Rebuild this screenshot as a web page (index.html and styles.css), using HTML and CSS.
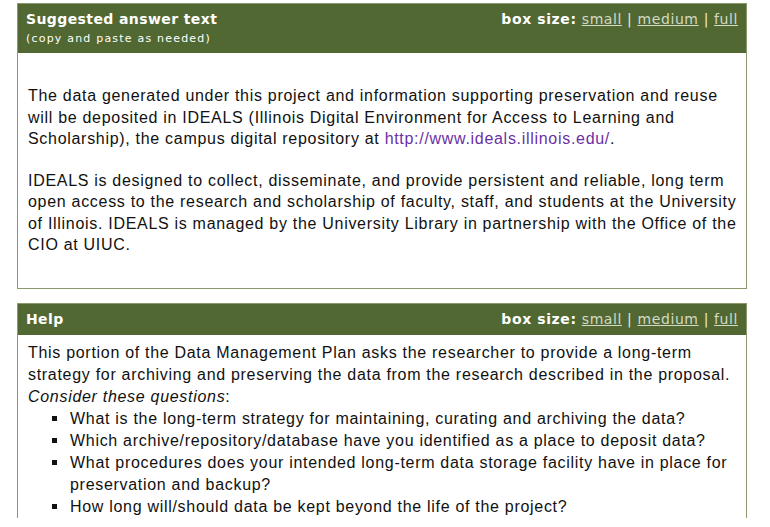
FILE: index.html
```html
<!DOCTYPE html>
<html>
<head>
<meta charset="utf-8">
<link rel="stylesheet" href="styles.css">
</head>
<body>
<div class="page">
  <section class="box">
    <div class="box-head tall">
      <div class="head-left">
        <div class="title">Suggested answer text</div>
        <div class="subtitle">(copy and paste as needed)</div>
      </div>
      <div class="sizes"><b>box size:</b> <a href="#">small</a> | <a href="#">medium</a> | <a href="#">full</a></div>
    </div>
    <div class="box-body answer">
      <p>The data generated under this project and information supporting preservation and reuse will be deposited in IDEALS (Illinois Digital Environment for Access to Learning and Scholarship), the campus digital repository at <a class="url" href="#">http://www.ideals.illinois.edu/</a>.</p>
      <p>IDEALS is designed to collect, disseminate, and provide persistent and reliable, long term open access to the research and scholarship of faculty, staff, and students at the University of Illinois. IDEALS is managed by the University Library in partnership with the Office of the CIO at UIUC.</p>
    </div>
  </section>
  <section class="box help">
    <div class="box-head">
      <div class="title">Help</div>
      <div class="sizes"><b>box size:</b> <a href="#">small</a> | <a href="#">medium</a> | <a href="#">full</a></div>
    </div>
    <div class="box-body helptext">
      <p>This portion of the Data Management Plan asks the researcher to provide a long-term strategy for archiving and preserving the data from the research described in the proposal. <i>Consider these questions</i>:</p>
      <ul>
        <li>What is the long-term strategy for maintaining, curating and archiving the data?</li>
        <li>Which archive/repository/database have you identified as a place to deposit data?</li>
        <li>What procedures does your intended long-term data storage facility have in place for preservation and backup?</li>
        <li>How long will/should data be kept beyond the life of the project?</li>
      </ul>
    </div>
  </section>
</div>
</body>
</html>
```
FILE: styles.css
```css
html, body {
  margin: 0;
  padding: 0;
  background: #ffffff;
}
.page {
  padding: 3px 0 0 17px;
  width: 730px;
}
.box {
  border: 1px solid #8a9a6e;
  background: #fff;
}
.box.help {
  margin-top: 14px;
  border-bottom: none;
}
.box-head {
  background: #526833;
  color: #fff;
  display: flex;
  justify-content: space-between;
  align-items: flex-start;
  padding: 6px 8px 7px 8px;
  font-family: "DejaVu Sans", Verdana, sans-serif;
}
.box-head.tall {
  height: 36px;
}
.title {
  font-weight: bold;
  font-size: 14px;
  letter-spacing: 0.4px;
  line-height: 18px;
}
.subtitle {
  font-size: 11px;
  letter-spacing: 1.2px;
  line-height: 14px;
  margin-top: 4px;
}
.sizes {
  font-size: 14px;
  letter-spacing: 0.6px;
  line-height: 18px;
  color: #e8ecde;
}
.sizes b {
  color: #fff;
}
.sizes a {
  color: #d3d9c6;
  text-decoration: underline;
}
.box-body {
  font-family: "Liberation Sans", Arial, sans-serif;
  font-size: 16px;
  letter-spacing: 0.7px;
  color: #111;
  padding: 0 0 0 10px;
}
.box-body p {
  margin: 0;
}
.answer {
  padding-top: 32px;
  padding-bottom: 32px;
  line-height: 21.5px;
}
.answer p + p {
  margin-top: 20px;
}
.url {
  color: #6a2fa6;
  text-decoration: none;
}
.helptext {
  padding-top: 7px;
  padding-right: 6px;
  line-height: 22px;
}
.helptext ul {
  margin: 0;
  padding-left: 42px;
  list-style: none;
}
.helptext li::before {
  content: "";
  display: inline-block;
  width: 5px;
  height: 5px;
  background: #111;
  margin-left: -18px;
  margin-right: 13px;
  vertical-align: 3px;
}
```
